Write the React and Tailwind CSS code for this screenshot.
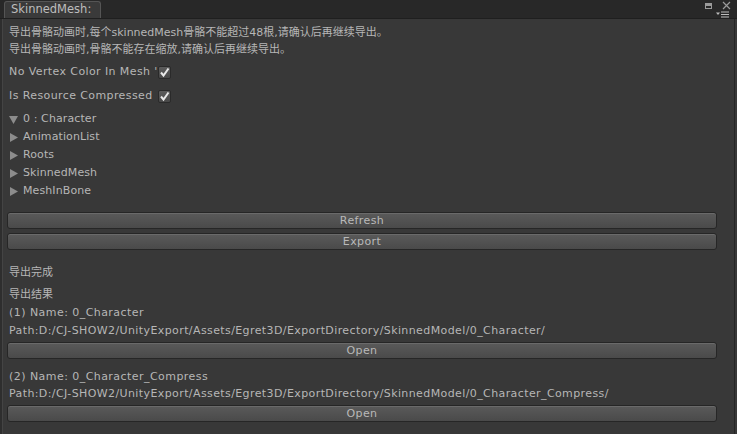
import React from "react";

const font = { fontFamily: '"DejaVu Sans", "Noto Sans CJK SC", sans-serif' };

function Btn({ label, mt }) {
  return (
    <div className={`${mt} mx-[7px] mr-[20px] h-[17px] shrink-0 rounded-[3px] border border-[#262626] bg-gradient-to-b from-[#5a5a5a] to-[#4a4a4a] shadow-[inset_0_1px_0_#6a6a6a] flex items-center justify-center text-[11px] tracking-[0.4px] text-[#b9b9b9] leading-none`}>
      {label}
    </div>
  );
}

function Check() {
  return (
    <span className="inline-flex w-[13px] h-[13px] shrink-0 rounded-[2px] border border-[#2a2a2a] bg-gradient-to-b from-[#5c5c5c] to-[#484848] items-center justify-center">
      <svg width="11" height="11" viewBox="0 0 11 11">
        <path d="M2 5.5 L4.5 8.5 L9.5 1.5" stroke="#e8e8e8" strokeWidth="2" fill="none" />
      </svg>
    </span>
  );
}

function Tri({ open }) {
  return open ? (
    <svg width="9" height="8" viewBox="0 0 9 8" className="mr-[5px] shrink-0">
      <path d="M0 0 L9 0 L4.5 8 Z" fill="#8c8c8c" />
    </svg>
  ) : (
    <svg width="8" height="9" viewBox="0 0 8 9" className="mr-[5px] ml-[1px] shrink-0">
      <path d="M0 0 L8 4.5 L0 9 Z" fill="#8c8c8c" />
    </svg>
  );
}

function Line({ children, cls = "" }) {
  return (
    <div className={`flex shrink-0 items-center pl-[9px] text-[11px] text-[#b6b6b6] whitespace-nowrap ${cls}`}>
      {children}
    </div>
  );
}

export default function App() {
  return (
    <div className="w-[737px] h-[434px] bg-[#383838] flex flex-col overflow-hidden relative" style={font}>
      <div className="h-[19px] bg-[#282828] border-b border-[#1f1f1f] flex items-end relative shrink-0">
        <div className="ml-[4px] w-[97px] h-[17px] bg-[#3a3a3a] border-t border-l border-r border-[#555] rounded-t-[3px] flex items-center pl-[6px] text-[11.5px] text-[#bdbdbd]">
          SkinnedMesh:
        </div>
        <div className="absolute right-[25px] top-[3px] w-[7px] h-[6px] border border-[#9a9a9a] border-t-[3px]" />
        <svg className="absolute right-[6px] top-[1px]" width="9" height="9" viewBox="0 0 9 9">
          <path d="M1 1 L8 8 M8 1 L1 8" stroke="#9a9a9a" strokeWidth="1.2" />
        </svg>
        <svg className="absolute right-[7px] top-[11px]" width="14" height="7" viewBox="0 0 14 7">
          <path d="M0 1.5 L4 1.5 L2 4 Z" fill="#bcbcbc" />
          <rect x="5" y="0.5" width="8" height="1" fill="#bcbcbc" />
          <rect x="5" y="3" width="8" height="1" fill="#bcbcbc" />
          <rect x="5" y="5.5" width="8" height="1" fill="#bcbcbc" />
        </svg>
      </div>
      <div className="absolute left-0 top-[19px] bottom-0 w-[3px] bg-[#2e2e2e] border-r border-[#444]" />
      <div className="absolute right-[2px] top-[19px] bottom-0 w-[1px] bg-[#262626]" />
      <div className="flex flex-col">
        <Line cls="mt-[6px] h-[17px]">导出骨骼动画时,每个skinnedMesh骨骼不能超过48根,请确认后再继续导出。</Line>
        <Line cls="h-[17px]">导出骨骼动画时,骨骼不能存在缩放,请确认后再继续导出。</Line>
        <Line cls="mt-[4px] h-[18px]">
          <span className="w-[149px] overflow-hidden tracking-[0.4px]">No Vertex Color In Mesh '</span>
          <Check />
        </Line>
        <Line cls="mt-[6px] h-[18px]">
          <span className="w-[149px] overflow-hidden tracking-[0.4px]">Is Resource Compressed</span>
          <Check />
        </Line>
        <Line cls="mt-[6px] h-[17px] tracking-[0.1px]"><Tri open />0 : Character</Line>
        <Line cls="h-[18px] tracking-[0.1px]"><Tri />AnimationList</Line>
        <Line cls="h-[18px] tracking-[0.1px]"><Tri />Roots</Line>
        <Line cls="h-[18px] tracking-[0.1px]"><Tri />SkinnedMesh</Line>
        <Line cls="h-[18px] tracking-[0.1px]"><Tri />MeshInBone</Line>
        <Btn label="Refresh" mt="mt-[12px]" />
        <Btn label="Export" mt="mt-[4px]" />
        <Line cls="mt-[14px] h-[18px]">导出完成</Line>
        <Line cls="mt-[5px] h-[17px]">导出结果</Line>
        <Line cls="h-[18px] tracking-[0.45px]">(1) Name: 0_Character</Line>
        <Line cls="h-[18px] tracking-[0.4px]">Path:D:/CJ-SHOW2/UnityExport/Assets/Egret3D/ExportDirectory/SkinnedModel/0_Character/</Line>
        <Btn label="Open" mt="mt-[2px]" />
        <Line cls="mt-[10px] h-[16px] tracking-[0.45px]">(2) Name: 0_Character_Compress</Line>
        <Line cls="h-[18px] tracking-[0.4px]">Path:D:/CJ-SHOW2/UnityExport/Assets/Egret3D/ExportDirectory/SkinnedModel/0_Character_Compress/</Line>
        <Btn label="Open" mt="mt-[2px]" />
      </div>
    </div>
  );
}
